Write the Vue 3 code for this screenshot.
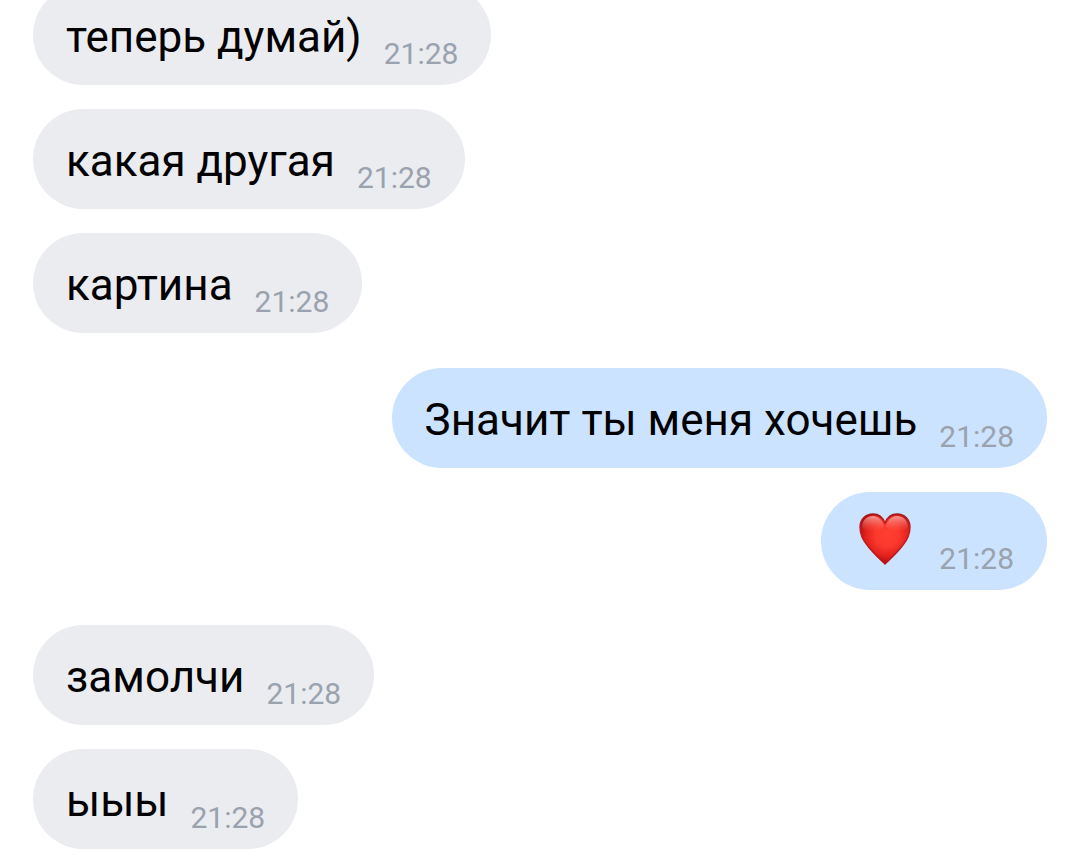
<script setup>
const messages = [
  { text: 'теперь думай)', time: '21:28' },
  { text: 'какая другая', time: '21:28' },
  { text: 'картина', time: '21:28' },
  { text: 'Значит ты меня хочешь', time: '21:28', own: true, turn: true },
  { heart: true, time: '21:28', own: true },
  { text: 'замолчи', time: '21:28', turn: true },
  { text: 'ыыы', time: '21:28' },
]
</script>

<template>
  <main class="chat">
    <div
      v-for="(m, i) in messages"
      :key="i"
      class="bubble"
      :class="{ own: m.own, turn: m.turn, emoji: m.heart }"
    >
      <svg v-if="m.heart" class="heart" viewBox="0 0 52 52" role="img" aria-label="heart">
        <defs>
          <radialGradient id="body" gradientUnits="userSpaceOnUse" cx="28" cy="22" r="30">
            <stop offset="0" stop-color="#ff4030" />
            <stop offset="0.4" stop-color="#fb382d" />
            <stop offset="0.7" stop-color="#e3211d" />
            <stop offset="1" stop-color="#a8090f" />
          </radialGradient>
          <linearGradient id="rim" x1="0" y1="0" x2="0" y2="1">
            <stop offset="0" stop-color="#a01a1f" />
            <stop offset="0.4" stop-color="#c0201f" />
            <stop offset="1" stop-color="#b81013" />
          </linearGradient>
          <linearGradient id="shine" x1="0" y1="0" x2="0" y2="1">
            <stop offset="0" stop-color="#ffd0c8" stop-opacity="0.7" />
            <stop offset="1" stop-color="#ff7466" stop-opacity="0" />
          </linearGradient>
        </defs>
        <path d="M26 51C22 47 14 40 8 32C3 26 1 20 1 14C1 6 7 1 14 1C20 1 24 5 26 10C28 5 32 1 38 1C45 1 51 6 51 14C51 20 49 26 44 32C38 40 30 47 26 51Z" fill="url(#body)" stroke="url(#rim)" stroke-width="1.4" />
        <path d="M3 15C3 7 8 3 14 3C20 3 24 8 25 14C20 19 9 20 3 15Z" fill="url(#shine)" />
        <path d="M49 15C49 7 44 3 38 3C32 3 28 8 27 14C32 19 43 20 49 15Z" fill="url(#shine)" />
      </svg>
      <span v-else class="text">{{ m.text }}</span>
      <time class="time">{{ m.time }}</time>
    </div>
  </main>
</template>

<style>
body {
  margin: 0;
  background: #fff;
}
</style>

<style scoped>
.chat {
  display: flex;
  flex-direction: column;
  align-items: flex-start;
  gap: 24px;
  margin-top: -15px;
  padding: 0 33px 13px;
  font-family: Roboto, "Noto Sans", sans-serif;
}
.bubble {
  display: flex;
  align-items: flex-end;
  gap: 22px;
  padding: 18px 33px 14px;
  border-radius: 50px;
  background: #ebecf0;
  color: #000;
}
.own {
  align-self: flex-end;
  background: #cce3ff;
}
.turn {
  margin-top: 11px;
}
.text {
  font-size: 44px;
  line-height: 68px;
}
.time {
  font-size: 30px;
  line-height: 34px;
  color: #99a2ad;
}
.emoji {
  padding-top: 21px;
}
.heart {
  width: 52px;
  height: 52px;
  margin: 0 6px 11px 5px;
}
</style>
